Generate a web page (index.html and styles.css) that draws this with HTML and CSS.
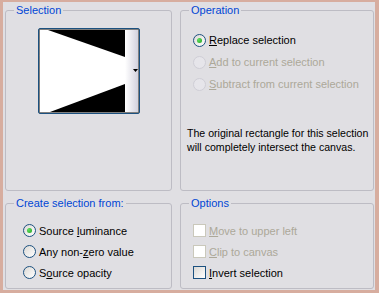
FILE: index.html
```html
<!DOCTYPE html>
<html lang="en">
<head>
    <meta charset="UTF-8">
    <title>Selection</title>
    <link rel="stylesheet" href="styles.css">
</head>
<body>

    <div class="window">
        <fieldset class="group">
            <legend>Selection</legend>
            <div class="preview">
                <svg width="100" height="84" viewBox="0 0 100 84">
                    <defs>
                        <linearGradient id="strip" x1="0" y1="0" x2="1" y2="0">
                            <stop offset="0" stop-color="#ffffff"/>
                            <stop offset="1" stop-color="#d3d2de"/>
                        </linearGradient>
                    </defs>
                    <rect x="1" y="1" width="85" height="82" fill="#000"/>
                    <polygon points="1,1 9,1 86,28 86,55 11,83 1,83" fill="#fff"/>
                    <rect x="86" y="1" width="13" height="82" fill="url(#strip)"/>
                    <polygon points="94,40 99,40 96.5,43" fill="#000"/>
                    <rect x="0.5" y="0.5" width="99" height="83" fill="none" stroke="#000" stroke-dasharray="1,1"/>
                </svg>
            </div>
        </fieldset>

        <fieldset class="group">
            <legend>Operation</legend>
            <div class="options-list op-list">
                <label class="option"><span class="radio checked"></span><span><u>R</u>eplace selection</span></label>
                <label class="option disabled"><span class="radio"></span><span><u>A</u>dd to current selection</span></label>
                <label class="option disabled"><span class="radio"></span><span><u>S</u>ubtract from current selection</span></label>
            </div>
            <p class="note">The original rectangle for this selection will completely intersect the canvas.</p>
        </fieldset>

        <fieldset class="group">
            <legend>Create selection from:</legend>
            <div class="options-list create-list">
                <label class="option"><span class="radio checked"></span><span>Source <u>l</u>uminance</span></label>
                <label class="option"><span class="radio"></span><span>Any non-<u>z</u>ero value</span></label>
                <label class="option"><span class="radio"></span><span>S<u>o</u>urce opacity</span></label>
            </div>
        </fieldset>

        <fieldset class="group">
            <legend>Options</legend>
            <div class="options-list check-list">
                <label class="option disabled"><span class="check"></span><span><u>M</u>ove to upper left</span></label>
                <label class="option disabled"><span class="check"></span><span><u>C</u>lip to canvas</span></label>
                <label class="option"><span class="check"></span><span><u>I</u>nvert selection</span></label>
            </div>
        </fieldset>
    </div>

</body>
</html>
```

FILE: styles.css
```css
body {
    margin: 0;
    padding: 0;
    background-color: #d7ad9f;
    font-family: "Liberation Sans", Arial, sans-serif;
    font-size: 11px;
    color: #000;
}

.window {
    margin: 2px 4px 3px 3px;
    height: 284px;
    padding: 2px 1px 2px 2px;
    background-color: #e0dfe3;
    display: grid;
    grid-template-columns: 167px 194px;
    grid-template-rows: 187px 92px;
    column-gap: 8px;
    row-gap: 6px;
}

.group {
    margin: 0;
    padding: 0;
    min-width: 0;
    border: 1px solid #bdbcc4;
    border-radius: 3px;
}

.group legend {
    margin-left: 8px;
    padding: 0 2px;
    line-height: 13px;
    color: #0046d5;
}

.preview {
    width: 100px;
    height: 84px;
    margin: 11px auto 0;
    border: 1px solid #1c5180;
    border-radius: 2px;
    background: #fff;
}

.preview svg {
    display: block;
}

.options-list {
    display: flex;
    flex-direction: column;
}

.op-list {
    margin: 12px 0 0 12px;
}

.op-list .option {
    height: 22px;
}

.create-list {
    margin: 10px 0 0 17px;
}

.check-list {
    margin: 10px 0 0 12px;
}

.create-list .option,
.check-list .option {
    height: 21px;
}

.option {
    display: flex;
    align-items: center;
    gap: 3px;
}

.option.disabled {
    color: #aca899;
}

.radio {
    width: 11px;
    height: 11px;
    border: 1px solid #1c5180;
    border-radius: 50%;
    background: linear-gradient(135deg, #dcd9d5, #ffffff);
    display: flex;
    align-items: center;
    justify-content: center;
}

.radio.checked::after {
    content: "";
    width: 5px;
    height: 5px;
    border-radius: 50%;
    background: radial-gradient(circle at 35% 35%, #5ee05e, #21a121);
}

.check {
    width: 11px;
    height: 11px;
    border: 1px solid #1c5180;
    background: linear-gradient(135deg, #dcd9d5, #ffffff);
}

.disabled .radio {
    border-color: #cfced6;
    background: #e6e5ea;
}

.disabled .check {
    border-color: #cac8bb;
    background: #fff;
}

.note {
    margin: 31px 0 0 6px;
    line-height: 14px;
    font-size: 10.6px;
}
```
